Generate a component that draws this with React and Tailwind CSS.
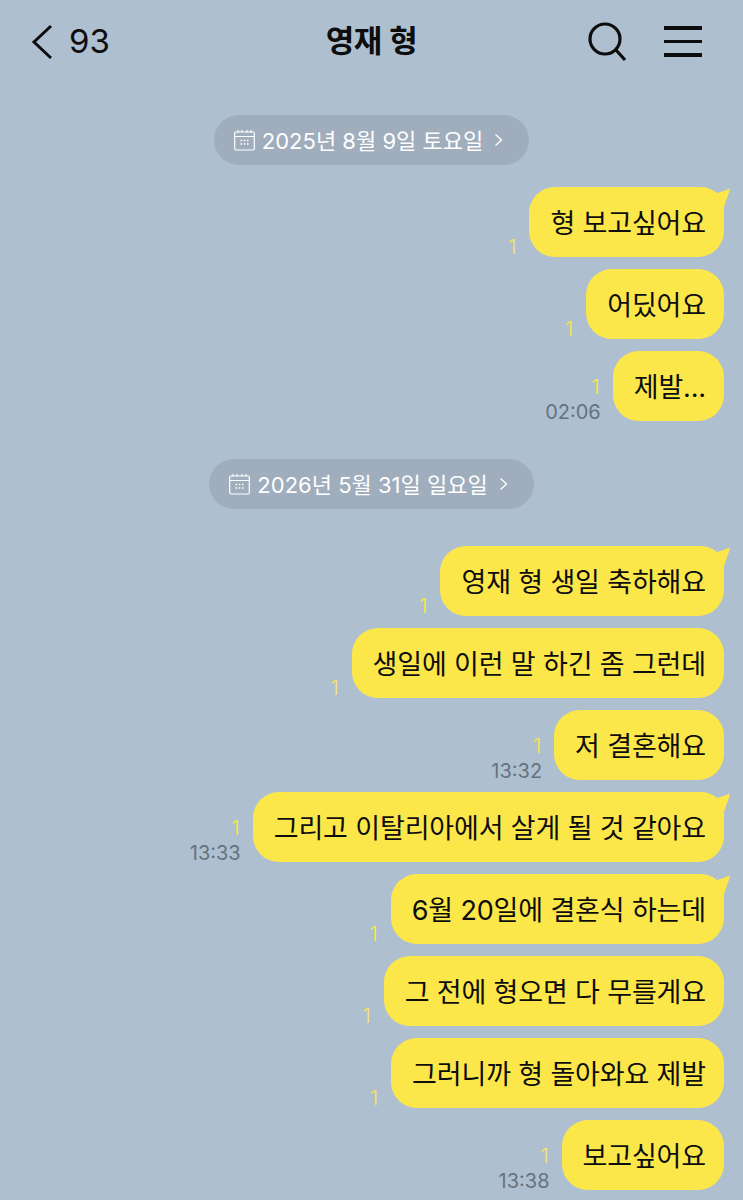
const FONT = "font-['Inter','Noto_Sans_CJK_KR',sans-serif]";

function Calendar() {
  return (
    <svg width="21" height="22" viewBox="0 0 21 22" fill="none" stroke="currentColor" strokeWidth="1.2">
      <rect x="0.7" y="3" width="19.6" height="18" rx="1.2" />
      <path d="M0.7 7.5h19.6M4 1v2.5M8 1v2.5M13 1v2.5M17 1v2.5" />
      <path d="M6.5 11.5h1.6M9.7 11.5h1.6M12.9 11.5h1.6M6.5 15h1.6M9.7 15h1.6M12.9 15h1.6" strokeWidth="1.4" />
    </svg>
  );
}

function DateChip({ text, className }) {
  return (
    <div className={`flex justify-center ${className}`}>
      <div className="flex h-[50px] items-center rounded-full bg-[#9fadbd] pl-[20px] pr-[25px] text-[22px] text-white">
        <Calendar />
        <span className="ml-[7px] pt-[2px]">{text}</span>
        <svg width="10" height="14" viewBox="0 0 10 14" fill="none" stroke="currentColor" strokeWidth="1.3" className="ml-[11px]">
          <path d="M1.5 1.5 7.5 7l-6 5.5" />
        </svg>
      </div>
    </div>
  );
}

function Message({ text, time, first }) {
  return (
    <div className="flex items-end justify-end pr-[19px]">
      <div className="mr-[12px] flex flex-col items-end">
        <span className="mr-[1px] text-[20px] font-light leading-[20px] text-[#fbe74a]">1</span>
        {time && <span className="mt-[6px] text-[20px] leading-[18px] text-[#66727f]">{time}</span>}
      </div>
      <div className="relative flex h-[70px] items-center rounded-[26px] bg-[#fbe74a] pl-[21px] pr-[18px] pt-[4px] text-[27px] tracking-[-0.15px] text-[#0d0d0d]">
        {first && (
          <svg width="32" height="24" viewBox="0 0 32 24" className="absolute right-[-8px] top-0">
            <path d="M0 0C8 0 13 3 17 6C21 5 26 3 30 1.5C29 7 26 13 24 20V24H0Z" fill="#fbe74a" />
          </svg>
        )}
        <span className="relative">{text}</span>
      </div>
    </div>
  );
}

export default function App() {
  return (
    <div className={`h-[1200px] w-[743px] overflow-hidden bg-[#aec0d0] ${FONT}`}>
      <header className="grid h-[83px] grid-cols-[1fr_auto_1fr] items-center px-[41px] text-[#0d0d0d]">
        <div className="-ml-[11px] flex items-center gap-[15px]">
          <svg width="24" height="36" viewBox="0 0 24 36" fill="none" stroke="currentColor" strokeWidth="3">
            <path d="M21 2 4 18l17 16" />
          </svg>
          <span className="text-[33px]">93</span>
        </div>
        <h1 className="text-[31px] font-semibold tracking-[-0.5px]">영재 형</h1>
        <div className="flex items-center justify-end gap-[37px]">
          <svg width="40" height="42" viewBox="0 0 40 42" fill="none" stroke="currentColor" strokeWidth="3.2">
            <circle cx="18" cy="18" r="15" />
            <path d="m29 29 9 10" />
          </svg>
          <div className="flex w-[38px] flex-col gap-[10px]">
            <div className="h-[3.5px] bg-[#0d0d0d]" />
            <div className="h-[3.5px] bg-[#0d0d0d]" />
            <div className="h-[3.5px] bg-[#0d0d0d]" />
          </div>
        </div>
      </header>
      <DateChip text="2025년 8월 9일 토요일" className="mt-[32px]" />
      <div className="mt-[22px] flex flex-col gap-[12px]">
        <Message text="형 보고싶어요" first />
        <Message text="어딨어요" />
        <Message text="제발..." time="02:06" />
      </div>
      <DateChip text="2026년 5월 31일 일요일" className="mt-[38px]" />
      <div className="mt-[37px] flex flex-col gap-[12px]">
        <Message text="영재 형 생일 축하해요" first />
        <Message text="생일에 이런 말 하긴 좀 그런데" />
        <Message text="저 결혼해요" time="13:32" />
        <Message text="그리고 이탈리아에서 살게 될 것 같아요" time="13:33" first />
        <Message text="6월 20일에 결혼식 하는데" first />
        <Message text="그 전에 형오면 다 무를게요" />
        <Message text="그러니까 형 돌아와요 제발" />
        <Message text="보고싶어요" time="13:38" />
      </div>
    </div>
  );
}
